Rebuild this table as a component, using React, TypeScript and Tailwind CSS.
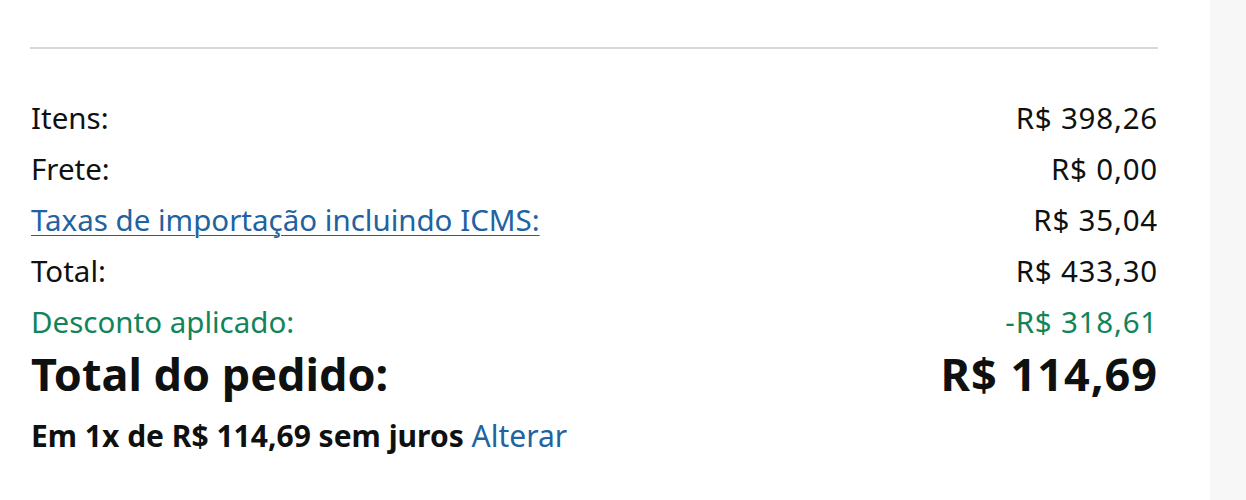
const rows = [
  { label: "Itens:", value: "R$ 398,26", tone: "plain" },
  { label: "Frete:", value: "R$ 0,00", tone: "plain" },
  { label: "Taxas de importação incluindo ICMS:", value: "R$ 35,04", tone: "link" },
  { label: "Total:", value: "R$ 433,30", tone: "plain" },
  { label: "Desconto aplicado:", value: "-R$ 318,61", tone: "green" },
];

export default function App() {
  return (
    <div className="flex h-[500px] w-[1246px] bg-white font-['Noto_Sans',sans-serif] text-[#0f1111]">
      <div className="w-[1210px] pl-[31px] pr-[52px]">
        <div className="-ml-px mt-[47px] h-[2px] bg-[#d5d9d9]" />

        {/* Summary lines */}
        <div className="mt-[44px] flex flex-col">
          {rows.map((row) => (
            <div
              key={row.label}
              className={`flex h-[51px] items-center justify-between text-[29.5px] ${
                row.tone === "green" ? "text-[#12845a]" : ""
              }`}
            >
              {row.tone === "link" ? (
                <a href="#" className="text-[#2162a1] underline decoration-1 underline-offset-[4px]">
                  {row.label}
                </a>
              ) : (
                <span>{row.label}</span>
              )}
              <span className="tracking-[0.8px]">{row.value}</span>
            </div>
          ))}
        </div>

        {/* Grand total */}
        <div className="flex h-[51px] items-center justify-between text-[45px] font-bold">
          <span>Total do pedido:</span>
          <span className="tracking-[1px]">R$ 114,69</span>
        </div>

        <div className="mt-[14px] h-[45px] text-[30px] leading-[45px] font-bold">
          Em 1x de R$ 114,69 sem juros{" "}
          <a href="#" className="font-normal text-[#2162a1]">
            Alterar
          </a>
        </div>
      </div>
      <div className="flex-1 bg-[#f7f7f7]" />
    </div>
  );
}
